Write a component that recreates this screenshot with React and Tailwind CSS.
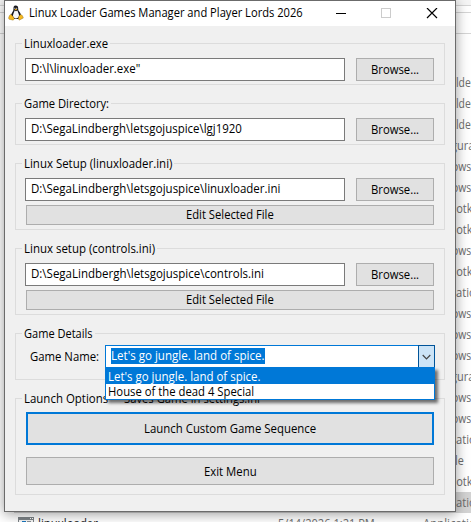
import { useLayoutEffect, useRef, useState } from "react";

// Text condensed horizontally to a fixed advance width.
function Fit({ w, children, className = "" }) {
  const ref = useRef(null);
  const [scale, setScale] = useState(1);
  useLayoutEffect(() => {
    setScale(w / ref.current.offsetWidth);
  }, [w]);
  return (
    <span className={`block shrink-0 ${className}`} style={{ width: w }}>
      <span ref={ref} className="inline-block origin-left whitespace-pre align-top" style={{ transform: `scaleX(${scale})` }}>
        {children}
      </span>
    </span>
  );
}

function Group({ parts, className, children }) {
  return (
    <section className={`border border-[#dcdcdc] ${className}`}>
      <div className="-mt-[9px] ml-[6px] flex h-[17px] w-max bg-[#f0f0f0] px-[2px] leading-[17px]">
        {parts.map(([text, w]) => (
          <Fit key={text} w={w}>{text}</Fit>
        ))}
      </div>
      {children}
    </section>
  );
}

function PathRow({ value, width }) {
  return (
    <div className="mt-[6px] ml-[9px] flex h-[23px] gap-[11px]">
      <div className="w-[320px] border border-[#7a7a7a] bg-white pl-[5px] leading-[19px]">
        <Fit w={width}>{value}</Fit>
      </div>
      <button className="flex w-[78px] justify-center border border-[#adadad] bg-[#e1e1e1] leading-[21px]">
        <Fit w={48}>Browse...</Fit>
      </button>
    </div>
  );
}

function EditButton() {
  return (
    <button className="mt-[4px] ml-[10px] flex h-[20px] w-[408px] justify-center border border-[#adadad] bg-[#e1e1e1] leading-[17px]">
      <Fit w={88}>Edit Selected File</Fit>
    </button>
  );
}

const fileTypes = [
  ["lder", 19, 0],
  ["lder", 19, 0],
  ["lder", 19, 0],
  ["guration", 43, -5],
  ["ows", 19, -4],
  ["ows", 19, -4],
  ["Hotkey", 36, -8],
  ["Hotkey", 36, -8],
  ["ows", 19, -4],
  ["Hotkey", 36, -8],
  ["ation", 27, 0],
  ["ows", 19, -4],
  ["ows", 19, -4],
  ["ows", 19, -4],
  ["guration", 43, -5],
  ["ows", 19, -4],
  ["ows", 19, -4],
  ["ation", 27, 0],
  ["le", 9, -1],
  ["Hotkey", 36, -8],
  ["ation", 27, 0],
];

function Explorer() {
  return (
    <div className="flex h-full flex-col bg-white text-[#6d6d6d]">
      <div className="h-[6px] shrink-0 border-b border-[#d5d5d5] bg-[#f5f5f5]" />
      <div className="h-[7px] shrink-0 border-b border-[#d5d5d5]" />
      <div className="h-[21px] shrink-0 border-b border-[#d5d5d5]" />
      <div className="mt-[38px] flex shrink-0 flex-col">
        {fileTypes.map(([label, w, shift], i) => (
          <div
            key={i}
            className={`flex h-[21px] overflow-hidden leading-[22px] ${i === 20 ? "ml-[14px] bg-[#d3d3d3] pl-[442px]" : "pl-[456px]"}`}
          >
            <div style={{ marginLeft: shift }}>
              <Fit w={w}>{label}</Fit>
            </div>
          </div>
        ))}
      </div>
      <div className="flex h-[21px] shrink-0 pl-[18px] leading-[21px]">
        <svg className="mt-[4px] h-[14px] w-[16px] shrink-0" viewBox="0 0 16 14">
          <rect width="16" height="14" fill="#7d8387" />
          <path d="M1 3h14v10H1z" fill="#f5f5f5" />
          <path d="M4 4h4v3H4z" fill="#1976bd" />
          <path d="M9 4h4v2H9z" fill="#8b9296" />
          <path d="M12 1h1v1h-1zM14 1h1v1h-1z" fill="#fff" />
        </svg>
        <div className="ml-[4px] w-[240px] shrink-0 text-[#222]">
          <Fit w={60}>linuxloader</Fit>
        </div>
        <div className="w-[145px] shrink-0">
          <Fit w={97}>5/14/2026 1:21 PM</Fit>
        </div>
        <Fit w={60}>Application</Fit>
      </div>
    </div>
  );
}

function Tux() {
  return (
    <svg className="h-[16px] w-[16px]" viewBox="0 0 16 16">
      <path d="M7.5 .5C5.7 .5 5.5 2 5.5 3.4c0 2-.4 2.5-1.3 4.1C3.2 9.2 2.6 10.600 3 12l3 2h4.500l2.500-2c.3-2-.5-3.500-1.400-4.900C10.300 5.600 10.200 5 10.200 3.500 10.200 1.700 9.600 .5 7.500 .5z" fill="#15151b" />
      <path d="M6.500 5.500 8 6.200l1.500-.7c.4 2 1.700 3.200 1.500 5.500-.2 1.500-1.600 2.500-3.200 2.500S4.800 12.200 5 10.600c.1-1.900 1.200-3 1.500-5.100z" fill="#f7f7f9" />
      <path d="M6.400 2.700h.9v1.200h-.9zM8.300 2.700h.9v1.200h-.9z" fill="#d5d5dc" />
      <path d="M6.300 4.300 7.800 3.800 9.300 4.400 7.900 5.500z" fill="#e8a91c" />
      <path d="M2.700 9.200 4.900 11.200 6.400 13.500 5.200 15.200 1 14.200.5 13.100 1.300 10.800zM12.900 9.600 11 10.700 10.200 13.500 11.200 15.200 15.400 13 14.400 10.600z" fill="#f5b81f" stroke="#6b4a0b" strokeWidth=".3" />
    </svg>
  );
}

function TitleBar() {
  return (
    <header className="flex h-[25px] bg-white leading-[24px]">
      <div className="mt-[4px] ml-[3px]">
        <Tux />
      </div>
      <Fit w={274} className="mr-px ml-[5px]">Linux Loader Games Manager and Player Lords 2026</Fit>
      <svg className="mt-[7px] ml-[32px] h-[11px] w-[102px]" viewBox="0 0 102 11" fill="none" shapeRendering="crispEdges">
        <path d="M0 5.500h10" stroke="#000" />
        <path d="M45.500 .5h9v9h-9z" stroke="#ccc" />
        <path d="M91 0l10 10M101 0L91 10" stroke="#000" strokeWidth="1.200" shapeRendering="auto" />
      </svg>
    </header>
  );
}

function GameCombo() {
  return (
    <div className="relative w-[330px]">
      <div className="flex h-[23px] border border-[#0078d7] bg-white">
        <div className="mt-[2px] ml-[5px] h-[16px] bg-[#0078d7] leading-[16px] text-white">
          <Fit w={154}>Let's go jungle. land of spice.</Fit>
        </div>
        <div className="-my-px -mr-px ml-auto flex w-[17px] items-center justify-center border border-[#005499] bg-[#cce4f7]">
          <svg className="h-[6px] w-[9px]" viewBox="0 0 9 6" fill="none">
            <path d="M.7 1 4.500 4.800 8.300 1" stroke="#444" strokeWidth="1.200" />
          </svg>
        </div>
      </div>
      <div className="absolute top-[22px] left-0 z-10 h-[33px] w-[330px] border border-[#0078d7] bg-white shadow-[3px_3px_3px_rgba(0,0,0,0.55)]">
        <div className="h-[16px] bg-[#0078d7] pl-[2px] leading-[18px] text-white">
          <Fit w={153}>Let's go jungle. land of spice.</Fit>
        </div>
        <div className="h-[15px] pl-[2px] leading-[15px]">
          <Fit w={146}>House of the dead 4 Special</Fit>
        </div>
      </div>
    </div>
  );
}

export default function App() {
  return (
    <div className="relative h-[522px] w-[471px] overflow-hidden font-['Open_Sans','Noto_Sans',sans-serif] text-[12px] text-black">
      <Explorer />
      <main className="absolute top-0 left-[4px] h-[512px] w-[452px] border border-[#6b6b6b] bg-[#f0f0f0] shadow-[0_2px_12px_rgba(0,0,0,0.4)]">
        <TitleBar />
        <div className="mt-[17px] ml-[10px] w-[430px]">
          <Group parts={[["Linuxloader.exe", 84]]} className="h-[42px]">
            <PathRow value={'D:\\l\\linuxloader.exe"'} width={109} />
          </Group>
          <Group parts={[["Game Directory:", 85]]} className="mt-[18px] h-[42px]">
            <PathRow value={"D:\\SegaLindbergh\\letsgojuspice\\lgj1920"} width={211} />
          </Group>
          <Group parts={[["Linux Setup (linuxloader.ini)", 148]]} className="mt-[18px] h-[67px]">
            <PathRow value={"D:\\SegaLindbergh\\letsgojuspice\\linuxloader.ini"} width={249} />
            <EditButton />
          </Group>
          <Group parts={[["Linux setup (controls.ini)", 131]]} className="mt-[18px] h-[67px]">
            <PathRow value={"D:\\SegaLindbergh\\letsgojuspice\\controls.ini"} width={233} />
            <EditButton />
          </Group>
          <Group parts={[["Game Details", 69]]} className="mt-[18px] h-[47px]">
            <div className="mt-[3px] ml-[14px] flex">
              <Fit w={69} className="mr-[6px] leading-[23px]">Game Name:</Fit>
              <GameCombo />
            </div>
          </Group>
          <Group parts={[["Launch Options", 84], [" -- ", 16], ["Saves Game in settings.ini", 136]]} className="mt-[18px] h-[97px]">
            <button className="mt-[5px] ml-[10px] flex h-[33px] w-[408px] justify-center border-2 border-[#0078d7] bg-[#e1e1e1] leading-[30px]">
              <Fit w={172}>Launch Custom Game Sequence</Fit>
            </button>
            <button className="mt-[12px] ml-[10px] flex h-[28px] w-[408px] justify-center border border-[#adadad] bg-[#e1e1e1] leading-[27px]">
              <Fit w={53}>Exit Menu</Fit>
            </button>
          </Group>
        </div>
      </main>
    </div>
  );
}
